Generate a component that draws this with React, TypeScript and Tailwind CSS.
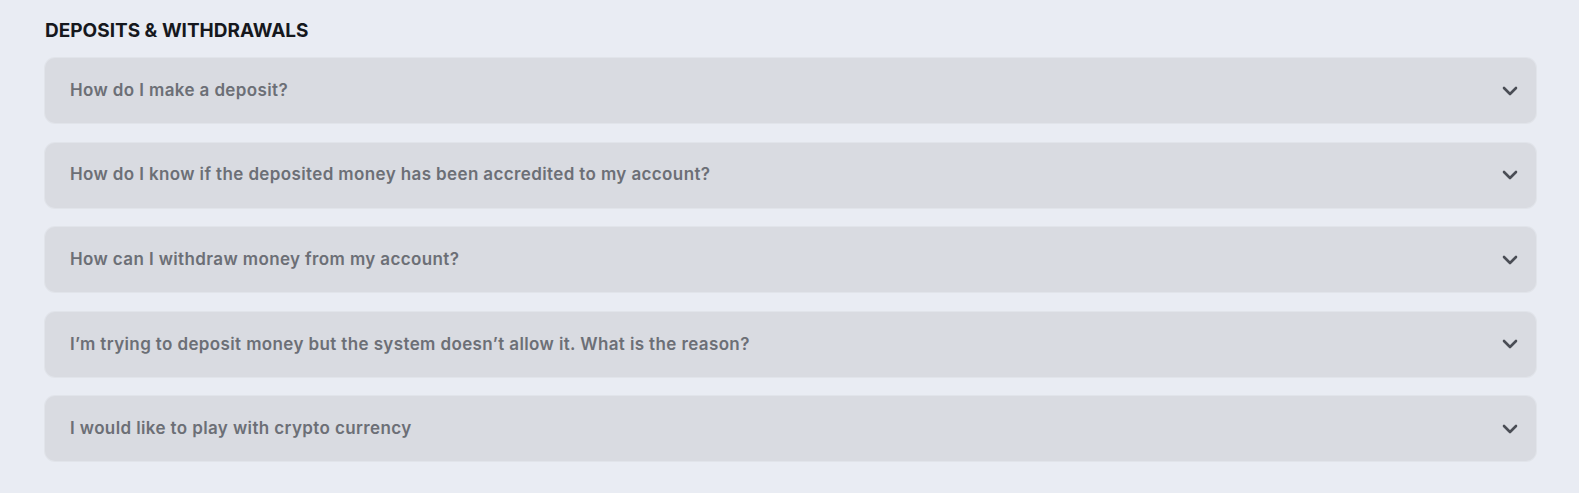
import React, { useState } from 'react';
import { ChevronDown } from 'lucide-react';

const questions = [
  'How do I make a deposit?',
  'How do I know if the deposited money has been accredited to my account?',
  'How can I withdraw money from my account?',
  'I’m trying to deposit money but the system doesn’t allow it. What is the reason?',
  'I would like to play with crypto currency',
];

const FaqItem = ({ question }: { question: string }) => {
  const [open, setOpen] = useState(false);

  return (
    <div className="rounded-[10px] bg-[#d9dbe1] shadow-[0_0_0_1px_#e1e4ea]">
      <button
        onClick={() => setOpen(!open)}
        className="flex h-[65px] w-full items-center justify-between pl-[25px] pr-[14px] text-left"
      >
        <span className="text-[17px] font-semibold tracking-[0.38px] text-[#6c6f76]">{question}</span>
        <ChevronDown size={24} strokeWidth={2.6} className="text-[#4a4d55]" />
      </button>
    </div>
  );
};

export default function App() {
  return (
    <div
      className="min-h-[493px] bg-[#e9ecf3] pl-[45px] pr-[43px] pt-[19px]"
      style={{ fontFamily: 'Inter, "Noto Sans", sans-serif' }}
    >
      <h2 className="text-[19px] font-bold uppercase leading-[24px] text-[#16181d]">Deposits &amp; Withdrawals</h2>
      <div className="mt-[15px] flex flex-col gap-[19.6px]">
        {questions.map((q) => (
          <FaqItem key={q} question={q} />
        ))}
      </div>
    </div>
  );
}
